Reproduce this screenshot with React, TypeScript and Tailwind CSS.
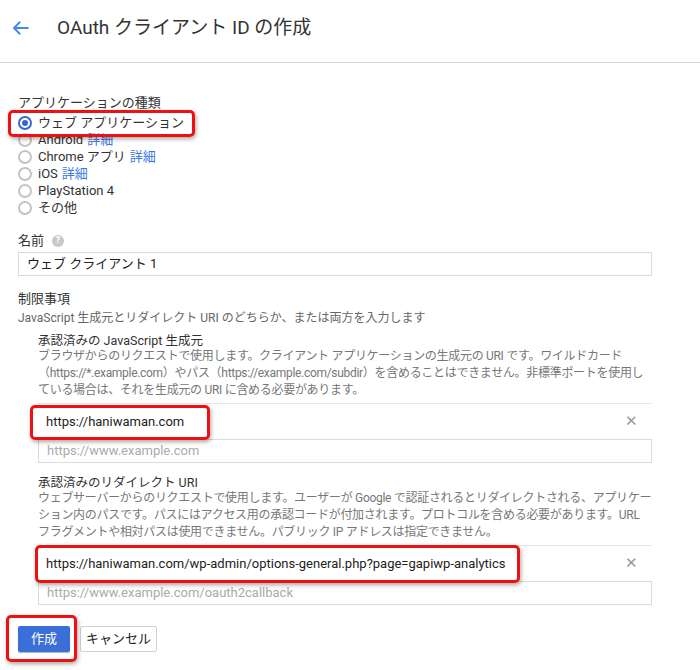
import React from "react";

const font = "font-['Roboto','Noto_Sans_CJK_JP',sans-serif]";

const Radio = ({ checked, children }: { checked?: boolean; children: React.ReactNode }) => (
    <div className="flex items-center h-[17px] gap-[6px]">
        <span className={`w-[14px] h-[14px] rounded-full border-2 flex items-center justify-center ${checked ? "border-[#3367d6]" : "border-[#c4c4c4]"}`}>
            {checked && <span className="w-[6px] h-[6px] rounded-full bg-[#3367d6]" />}
        </span>
        <span className="text-[13px] text-[#333]">{children}</span>
    </div>
);

const More = () => <span className="text-[#3b78e7] ml-1">詳細</span>;

const RedBox = ({ className }: { className: string }) => (
    <div className={`absolute border-[3px] border-[#ee1111] rounded-[5px] shadow-[1px_2px_4px_rgba(0,0,0,0.35)] pointer-events-none ${className}`} />
);

const UriBlock = ({ title, lines, value, placeholder }: { title: string; lines: string[]; value: string; placeholder: string }) => (
    <div>
        <div className="text-[12.5px] leading-[14px] text-[#333]">{title}</div>
        <div className="text-[12px] leading-[17px] text-[#777] tracking-[-0.3px]">
            {lines.map((l, i) => <div key={i} className="whitespace-nowrap">{l}</div>)}
        </div>
        <div className="mt-[4px] border-t border-[#e6e6e6] w-[614px]">
            <div className="flex items-center justify-between h-[35px] pl-[8px] pr-[14px]">
                <span className="text-[13px] text-[#222]">{value}</span>
                <span className="text-[#999] text-[15px]">✕</span>
            </div>
            <div className="h-[24px] border border-[#dadada] flex items-center px-[8px] text-[13px] text-[#aaa]">{placeholder}</div>
        </div>
    </div>
);

export default function App() {
    return (
        <div className={`relative w-[700px] h-[670px] bg-white overflow-hidden ${font}`}>
            <div className="h-[63px] border-b border-[#d8d8d8] flex items-center pb-[6px]">
                <svg className="ml-[11px]" width="20" height="20" viewBox="0 0 24 24" fill="none" stroke="#4285f4" strokeWidth="2.2">
                    <path d="M21 12H4M11 4.5L3.5 12l7.5 7.5" />
                </svg>
                <h1 className="ml-[26px] text-[19px] text-[#333]">OAuth クライアント ID の作成</h1>
            </div>

            <div className="pl-[18px]">
                <div className="mt-[31px] text-[13px] leading-[17px] text-[#333]">アプリケーションの種類</div>
                <div className="mt-[3px] flex flex-col">
                    <Radio checked>ウェブ アプリケーション</Radio>
                    <Radio>Android<More /></Radio>
                    <Radio>Chrome アプリ<More /></Radio>
                    <Radio>iOS<More /></Radio>
                    <Radio>PlayStation 4</Radio>
                    <Radio>その他</Radio>
                </div>

                <div className="mt-[16px] flex items-center h-[17px] gap-[8px] text-[13px] text-[#333]">
                    名前
                    <span className="w-[12px] h-[12px] rounded-full bg-[#c8c8c8] text-white text-[9px] font-bold flex items-center justify-center">?</span>
                </div>
                <div className="mt-[3px] w-[634px] h-[24px] border border-[#dadada] flex items-center px-[8px] text-[13px] text-[#222]">ウェブ クライアント 1</div>

                <div className="mt-[14px] text-[13px] leading-[17px] text-[#333]">制限事項</div>
                <div className="mt-[3px] text-[12px] leading-[17px] text-[#666]">JavaScript 生成元とリダイレクト URI のどちらか、または両方を入力します</div>

                <div className="pl-[20px] mt-[7px]">
                    <UriBlock
                        title="承認済みの JavaScript 生成元"
                        lines={[
                            "ブラウザからのリクエストで使用します。クライアント アプリケーションの生成元の URI です。ワイルドカード",
                            "（https://*.example.com）やパス（https://example.com/subdir）を含めることはできません。非標準ポートを使用し",
                            "ている場合は、それを生成元の URI に含める必要があります。",
                        ]}
                        value="https://haniwaman.com"
                        placeholder="https://www.example.com"
                    />
                    <div className="mt-[13px]">
                        <UriBlock
                            title="承認済みのリダイレクト URI"
                            lines={[
                                "ウェブサーバーからのリクエストで使用します。ユーザーが Google で認証されるとリダイレクトされる、アプリケー",
                                "ション内のパスです。パスにはアクセス用の承認コードが付加されます。プロトコルを含める必要があります。URL",
                                "フラグメントや相対パスは使用できません。パブリック IP アドレスは指定できません。",
                            ]}
                            value="https://haniwaman.com/wp-admin/options-general.php?page=gapiwp-analytics"
                            placeholder="https://www.example.com/oauth2callback"
                        />
                    </div>
                </div>

                <div className="mt-[21px] flex gap-[10px]">
                    <button className="w-[52px] h-[26px] bg-[#3b6fd8] text-white text-[13px] rounded-[2px] shadow-[0_1px_1px_rgba(0,0,0,0.3)]">作成</button>
                    <button className="w-[77px] h-[26px] bg-white border border-[#d0d0d0] text-[#222] text-[13px] rounded-[2px]">キャンセル</button>
                </div>
            </div>

            <RedBox className="left-[8px] top-[110px] w-[187px] h-[27px]" />
            <RedBox className="left-[30px] top-[405px] w-[180px] h-[35px]" />
            <RedBox className="left-[35px] top-[545px] w-[485px] h-[38px]" />
            <RedBox className="left-[6px] top-[615px] w-[71px] h-[47px]" />
        </div>
    );
}
